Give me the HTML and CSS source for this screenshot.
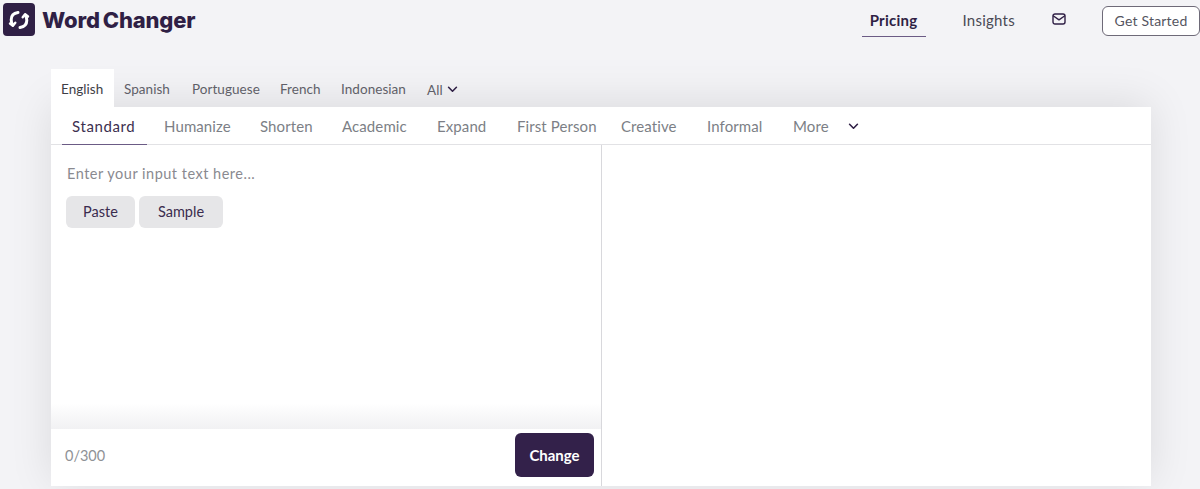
FILE: index.html
```html
<!DOCTYPE html>
<html lang="en">
<head>
<meta charset="utf-8">
<title>Word Changer</title>
<link rel="stylesheet" href="styles.css">
</head>
<body>
<header class="topbar">
  <div class="brand">
    <span class="brand-mark">
      <svg viewBox="0 0 32 32" width="32" height="32" fill="none" stroke="#fff" stroke-width="3" stroke-linecap="round" stroke-linejoin="round">
        <path d="M15 8.500c-4 .6-6.800 3.200-6.800 7.200 0 2 .5 3.700 1.500 5.200"/>
        <path d="M7 19.500l2.900 2.300 2.400-3" stroke-width="2.400"/>
        <path d="M17 23.500c4-.6 6.800-3.200 6.800-7.200 0-2-.5-3.700-1.500-5.200"/>
        <path d="M25 12.500l-2.900-2.300-2.400 3" stroke-width="2.400"/>
      </svg>
    </span>
    <span class="brand-name">Word<span class="brand-gap"></span>Changer</span>
  </div>
  <nav class="topnav">
    <a class="topnav-link topnav-active">Pricing</a>
    <a class="topnav-link topnav-insights">Insights</a>
    <span class="mail-icon">
      <svg viewBox="0 0 14 12" width="14" height="12" fill="none" stroke="#2f1f45" stroke-width="1.400" stroke-linejoin="round" stroke-linecap="round">
        <rect x="1" y="1" width="12" height="10" rx="2"/>
        <path d="M1.500 3l5.500 3.800L12.500 3"/>
      </svg>
    </span>
    <a class="cta">Get Started</a>
  </nav>
</header>

<main class="tool">
  <div class="langs">
    <span class="lang lang-active">English</span>
    <span class="lang">Spanish</span>
    <span class="lang">Portuguese</span>
    <span class="lang">French</span>
    <span class="lang">Indonesian</span>
    <span class="lang lang-all">All
      <svg class="chev" viewBox="0 0 12 8" width="11" height="7" fill="none" stroke="#2f1f45" stroke-width="1.800" stroke-linecap="round" stroke-linejoin="round"><path d="M1.500 1.500L6 6l4.500-4.500"/></svg>
    </span>
  </div>
  <div class="card">
    <div class="modes">
      <span class="mode mode-active">Standard</span>
      <span class="mode">Humanize</span>
      <span class="mode">Shorten</span>
      <span class="mode">Academic</span>
      <span class="mode">Expand</span>
      <span class="mode">First Person</span>
      <span class="mode">Creative</span>
      <span class="mode">Informal</span>
      <span class="mode">More</span>
      <svg class="chev mode-chev" viewBox="0 0 12 8" width="11" height="7" fill="none" stroke="#2f1f45" stroke-width="1.800" stroke-linecap="round" stroke-linejoin="round"><path d="M1.500 1.500L6 6l4.500-4.500"/></svg>
    </div>
    <div class="panes">
      <section class="pane-input">
        <div class="input-body">
          <p class="placeholder">Enter your input text here...</p>
          <div class="actions">
            <button class="ghost ghost-paste">Paste</button>
            <button class="ghost ghost-sample">Sample</button>
          </div>
        </div>
        <div class="input-foot">
          <span class="count">0/300</span>
          <button class="submit">Change</button>
        </div>
      </section>
      <section class="pane-output"></section>
    </div>
  </div>
</main>
</body>
</html>
```

FILE: styles.css
```css
* { box-sizing: border-box; }
html, body { margin: 0; height: 489px; overflow: hidden; }
body {
  background: #f3f3f6;
  font-family: "Lato", "Open Sans", sans-serif;
  color: #2f1f45;
}
.topbar {
  height: 69px;
  display: flex;
  justify-content: space-between;
  align-items: flex-start;
  padding: 3px 0 0 3px;
}
.brand { display: flex; align-items: center; gap: 7px; height: 33px; }
.brand-mark {
  width: 32px; height: 33px;
  background: #2f1f45;
  border-radius: 4px;
  display: flex; align-items: center; justify-content: center;
}
.brand-name {
  font-family: "Inter", sans-serif;
  font-size: 22px;
  font-weight: 800;
  letter-spacing: -.18px;
  color: #2f1f45;
}
.brand-gap { display: inline-block; width: 3px; }
.topnav { display: flex; align-items: flex-start; }
.topnav-link { font-size: 15px; letter-spacing: .25px; height: 32px; line-height: 30px; margin-top: 2px; }
.topnav-active {
  width: 64px;
  text-align: center;
  font-weight: 700;
  color: #2f1f45;
  border-bottom: 1px solid #6b5b85;
}
.topnav-insights { margin-left: 37px; color: #4a4a55; }
.mail-icon { margin-left: 37px; margin-top: 10px; display: flex; }
.cta {
  margin-left: 36px;
  margin-top: 3px;
  width: 98px; height: 30px;
  border: 1px solid #6e6a78;
  border-radius: 6px;
  background: #fff;
  color: #55555f;
  font-size: 14px;
  letter-spacing: .2px;
  text-align: center;
  line-height: 28px;
}
.tool { width: 1100px; margin-left: 51px; }
.langs {
  height: 38px;
  display: grid;
  grid-template-columns: 63px 68px 88px 61px 86px auto;
  justify-content: start;
}
.lang {
  height: 38px;
  line-height: 41px;
  padding-left: 10px;
  font-size: 13.500px;
  letter-spacing: .05px;
  color: #5f5f68;
}
.lang-active { background: #fff; color: #3e3e46; position: relative; z-index: 1; }
.lang-all { display: flex; align-items: center; gap: 4px; line-height: normal; padding-top: 3px; }
.card {
  background: #fff;
  height: 379px;
  display: flex;
  flex-direction: column;
  box-shadow: 0 -4px 40px rgba(0,0,0,.1);
}
.modes {
  height: 38px;
  display: grid;
  grid-template-columns: 93px 96px 82px 95px 80px 104px 86px 86px 65px auto;
  justify-content: start;
  padding-left: 10px;
  border-bottom: 1px solid #e2e2e5;
  flex: none;
}
.mode {
  font-size: 15px;
  letter-spacing: .1px;
  color: #7c7f86;
  padding-left: 10px;
  line-height: 39px;
  height: 38px;
  white-space: nowrap;
}
.mode-active {
  width: 85px;
  margin-left: 1px;
  letter-spacing: .6px;
  color: #3c2f50;
  border-bottom: 1px solid #6b5b85;
}
.mode-chev { align-self: center; margin-top: 1px; }
.panes { flex: 1; display: flex; min-height: 0; }
.pane-input {
  width: 551px;
  border-right: 1px solid #d8d8dc;
  display: flex;
  flex-direction: column;
}
.pane-output { flex: 1; }
.input-body {
  flex: 1;
  padding: 19px 15px 0;
  background: linear-gradient(to bottom, #fff 0, #fff 258px, #f1f1f3 100%);
}
.placeholder {
  margin: 0 0 12px;
  padding-left: 1px;
  font-size: 14.500px;
  line-height: 20px;
  letter-spacing: .5px;
  color: #8a8a90;
}
.actions { display: flex; gap: 4px; }
.ghost {
  height: 32px;
  border: 0;
  border-radius: 6px;
  background: #e6e6e8;
  color: #3a2c4e;
  font-family: inherit;
  font-size: 14.500px;
  padding: 0 0 2px;
}
.ghost-paste { width: 69px; }
.ghost-sample { width: 84px; }
.input-foot {
  height: 57px;
  flex: none;
  display: flex;
  align-items: flex-start;
  justify-content: space-between;
  padding: 4px 7px 0 14px;
}
.count { font-size: 14.500px; color: #8f9296; line-height: 46px; }
.submit {
  width: 79px; height: 44px;
  border: 0;
  border-radius: 6px;
  background: #33214a;
  color: #fff;
  font-family: inherit;
  font-size: 15px;
  font-weight: 700;
  padding: 0;
}
```
